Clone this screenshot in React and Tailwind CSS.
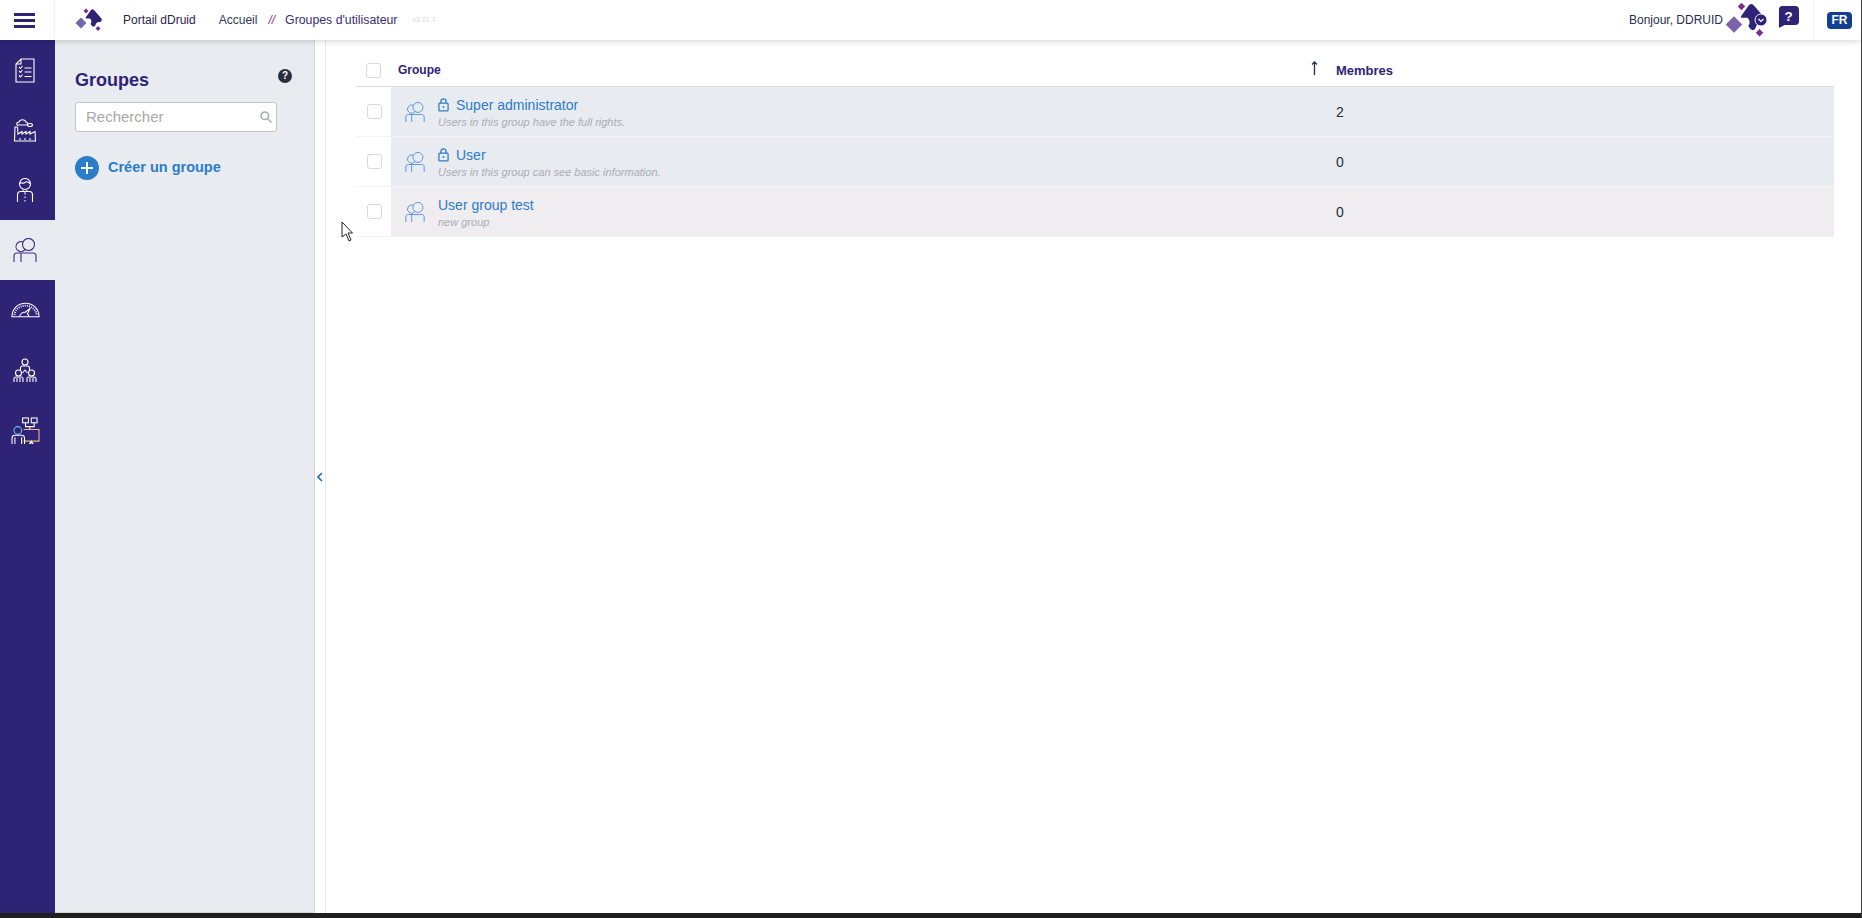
import React from "react";

const rows = [
  { name: "Super administrator", desc: "Users in this group have the full rights.", count: 2, locked: true, bg: "bg-[#e8ebf0]" },
  { name: "User", desc: "Users in this group can see basic information.", count: 0, locked: true, bg: "bg-[#e8ebf0]" },
  { name: "User group test", desc: "new group", count: 0, locked: false, bg: "bg-[#f0edf0]" },
];

function Logo({ className, badge }) {
  return (
    <svg viewBox="0 0 28 24" className={className}>
      <path d="M6 9.500 11.500 15 6 20.500.5 15Z" fill="#7b63ab" />
      <path d="M11 .5 13.500 3 11 5.500 8.500 3Z" fill="#7a2f8f" />
      <path d="M16 2c1-1 2-1 3 0l7 8c1 1 1 2.500 0 3.500l-1 .5c-2-.5-4 .5-4.500 3l-.5 1c-1 1-2 1-3 0l-1.500-2c1.500-2 1-4-.5-5.500L11 10.500c-.5-.5-.5-1 0-1.500Z" fill="#2f2376" />
      <path d="M23 18 25.500 20.500 23 23 20.500 20.500Z" fill="#7a2f8f" />
      {badge && <circle cx="24" cy="12" r="4" fill="#2f2376" stroke="#fff" strokeWidth="0.6" />}
      {badge && <path d="m22.300 11.300 1.700 1.600 1.700-1.600" fill="none" stroke="#fff" strokeWidth="0.8" />}
    </svg>
  );
}

function GroupIcon({ className }) {
  return (
    <svg viewBox="0 0 24 24" fill="none" stroke="currentColor" strokeWidth="1.100" className={className}>
      <path d="M10.060 3.950A5 5 0 1 0 12.060 11.410" />
      <circle cx="15.500" cy="6.500" r="6" />
      <path d="M1 24v-6c0-2 1-3 3-3h16c2 0 3 1 3 3v6M8 15v9" />
    </svg>
  );
}

function LockIcon() {
  return (
    <svg viewBox="0 0 12 15" fill="none" stroke="#2b7cc9" strokeWidth="1.400" className="w-[11px] h-[14px] shrink-0">
      <rect x="1" y="5.500" width="10" height="8.500" rx="1" />
      <path d="M3.200 5.500V3.500a2.800 2.800 0 0 1 5.600 0v2" />
      <circle cx="6" cy="9.700" r="1" fill="#2b7cc9" stroke="none" />
    </svg>
  );
}

function NavItem({ active, children }) {
  return (
    <div className={"h-[60px] flex items-center justify-center pr-[5px] " + (active ? "bg-[#e8ebf0] text-[#3a2d86]" : "text-white")}>
      {children}
    </div>
  );
}

function Checkbox() {
  return <div className="w-[15px] h-[15px] rounded-[3px] border border-[#d9d9d9] bg-white shrink-0" />;
}

export default function App() {
  return (
    <div className="relative w-[1862px] h-[918px] flex flex-col overflow-hidden bg-white font-['Liberation_Sans',Arial,sans-serif] border-r border-[#3a3a3a]">
      <header className="h-10 flex items-center shrink-0 bg-white shadow-[0_1px_6px_rgba(0,0,0,0.18)] relative z-10">
        <div className="w-[55px] h-full flex items-center justify-center pr-[6px] border-r border-[#f0f0f0]">
          <div className="w-[21px] flex flex-col gap-[3px]">
            <span className="h-[3px] bg-[#2f2376]" />
            <span className="h-[3px] bg-[#2f2376]" />
            <span className="h-[3px] bg-[#2f2376]" />
          </div>
        </div>
        <Logo className="w-[28px] h-[24px] ml-5" />
        <span className="ml-5 text-xs text-[#2b2350]">Portail dDruid</span>
        <span className="ml-[23px] text-xs text-[#2b3a5c]">Accueil</span>
        <span className="ml-[11px] text-xs italic text-[#8a2a8f]">//</span>
        <span className="ml-[10px] text-[12.300px] text-[#3a2d76]">Groupes d'utilisateur</span>
        <span className="ml-[15px] text-[7px] text-[#d8d8d8]">v3.21.7</span>
        <div className="ml-auto flex items-center h-full">
          <span className="text-xs text-[#2b2d50]">Bonjour, DDRUID</span>
          <Logo badge className="w-[42px] h-[36px] ml-[2px]" />
          <svg viewBox="0 0 22 23" className="w-[21px] h-[22px] ml-[11px] -mt-[6px]">
            <path d="M4 0h14a4 4 0 0 1 4 4v12a4 4 0 0 1-4 4H7l-6 3 0-19a4 4 0 0 1 3-4Z" fill="#2f2376" />
            <text x="11" y="15.500" textAnchor="middle" fontSize="14" fontWeight="700" fill="#fff" fontFamily="Liberation Sans">?</text>
          </svg>
          <div className="w-12 h-full ml-[14px] flex items-center justify-center pl-[4px] border-l border-[#f0f0f0]">
            <span className="w-[25px] h-[17px] rounded-[4px] bg-[#12408f] text-white text-xs font-bold leading-[17px] text-center">FR</span>
          </div>
        </div>
      </header>

      <div className="flex flex-1 min-h-0">
        <nav className="w-[55px] shrink-0 bg-[#2f2376]">
          <NavItem>
            <svg viewBox="0 0 20 25" fill="none" stroke="currentColor" strokeWidth="1.100" className="w-5 h-[25px]">
              <path d="M6 1h13v23H1V6ZM6 1v5H1" />
              <path d="m4 9 1.500 1.500L7.500 8M4 13l1.500 1.500L7.500 12M4 17.500 5.500 19l2-2.500M9.500 10h7M9.500 14h7M9.500 18.500h7" />
            </svg>
          </NavItem>
          <NavItem>
            <svg viewBox="0 0 24 24" fill="none" stroke="currentColor" strokeWidth="1.100" className="w-6 h-6">
              <path d="M1.500 23 2 9h2.500l.5 7 4-2.500V16l4-2.500V16l4-2.500V16l5-2.500.5 9.500Z" />
              <path d="M7 20v2M12 20v2M17 20v2" />
              <path d="M4 7c-1-2 1-3 2-3 1-3 6-3 7 0 2 0 2 3 0 3Z" />
              <ellipse cx="17" cy="7" rx="2.500" ry="1.500" />
            </svg>
          </NavItem>
          <NavItem>
            <svg viewBox="0 0 18 25" fill="none" stroke="currentColor" strokeWidth="1.100" className="w-[18px] h-[25px]">
              <circle cx="9" cy="6" r="5.500" />
              <path d="M3.500 5.500c2-2 3 1 5.500-1s3 0 5.500 1M1.500 24v-7c0-2 1-3.500 3-3.500h9c2 0 3 1.500 3 3.500v7" />
              <path d="M9 15v9" strokeDasharray="1.500 2" />
              <path d="m6.500 12.500 2.500 1.500 2.500-1.500" />
            </svg>
          </NavItem>
          <NavItem active>
            <GroupIcon className="w-6 h-6" />
          </NavItem>
          <NavItem>
            <svg viewBox="0 0 30 16" fill="none" stroke="currentColor" strokeWidth="1.100" className="w-[29px] h-4">
              <path d="M1 15C1 7 7 1 15 1s14 6 14 14Z" />
              <path d="M3.500 13C4 8 9 3.500 15 3.500S26 8 26.500 13" strokeDasharray="1 1.200" strokeWidth="2" />
              <path d="M9 15c0-3 3-5 5.500-4.500L20 6l-3 6c1 1 1.500 2 1.500 3" />
            </svg>
          </NavItem>
          <NavItem>
            <svg viewBox="0 0 24 25" fill="none" stroke="currentColor" strokeWidth="1.100" className="w-6 h-[25px]">
              <circle cx="12" cy="4" r="3" />
              <path d="M7.500 12v-2c0-1 .5-2 2-2h5c1.500 0 2 1 2 2v2" />
              <circle cx="5.500" cy="15" r="3" />
              <circle cx="18.500" cy="15" r="3" />
              <path d="M1 24v-3c0-1 .5-2 2-2h5c1.500 0 2 1 2 2v3M14 24v-3c0-1 .5-2 2-2h5c1.500 0 2 1 2 2v3M4 24v-4M7 24v-4M17 24v-4M20 24v-4M9.500 15l2.500-3 2.500 3" />
            </svg>
          </NavItem>
          <NavItem>
            <svg viewBox="0 0 30 28" fill="none" stroke="currentColor" strokeWidth="1.100" className="w-[29px] h-[27px]">
              <rect x="12" y="1" width="6" height="5" />
              <rect x="21" y="1" width="6" height="5" />
              <path d="M15 6v4h9V6M19.500 10v3" />
              <path d="M13 13h16v12H13" stroke="#f0b98a" />
              <path d="M19 28l2-3 2 3Z" />
              <circle cx="7" cy="14" r="4" stroke="#6fc3f0" />
              <path d="M1 28v-6c0-2 1-3 3-3h7c2 0 3 1 3 3v6M4 28v-7M11 28v-7" />
            </svg>
          </NavItem>
        </nav>

        <aside className="w-[260px] shrink-0 bg-[#e8ebf0] border-r border-b border-[#d5d7da] pt-[30px] pl-5 pr-[37px]">
          <div className="flex items-start justify-between h-8">
            <h1 className="text-lg leading-5 font-bold text-[#2f2376]">Groupes</h1>
            <span className="w-[14px] h-[14px] mt-[-1px] mr-[-15px] rounded-full bg-[#2a2f3e] text-white text-[10px] font-bold leading-[14px] text-center">?</span>
          </div>
          <div className="h-[30px] w-[202px] flex items-center justify-between pl-[10px] pr-[11px] bg-white border border-[#c4c4c4] rounded-[3px]">
            <span className="text-[15px] text-[#a8a8a8]">Rechercher</span>
            <svg viewBox="0 0 12 12" fill="none" stroke="#a9adb3" strokeWidth="1.500" className="w-3 h-3 -mr-[7px]">
              <circle cx="4.800" cy="4.800" r="3.800" />
              <path d="m7.800 7.800 3.700 3.700" />
            </svg>
          </div>
          <div className="flex items-center mt-[24px]">
            <span className="w-6 h-6 rounded-full bg-[#2b7cc9] flex items-center justify-center">
              <svg viewBox="0 0 14 14" stroke="#fff" strokeWidth="2" className="w-[14px] h-[14px]">
                <path d="M7 1v12M1 7h12" />
              </svg>
            </span>
            <span className="ml-[9px] text-[14.500px] font-bold text-[#2b7cc9]">Créer un groupe</span>
          </div>
        </aside>

        <div className="w-[11px] shrink-0 border-r border-[#e8e8e8] flex items-center justify-center pr-[1px]">
          <svg viewBox="0 0 6 10" fill="none" stroke="#1f6fb5" strokeWidth="1.600" className="w-[6px] h-[10px]">
            <path d="M5 1 1 5l4 4" />
          </svg>
        </div>

        <main className="flex-1 min-w-0 pl-[30px] pr-[27px] pt-[14px]">
          <div className="h-[33px] flex items-center border-b border-[#dcdcdc]">
            <div className="w-[42px] pl-[10px] shrink-0"><Checkbox /></div>
            <div className="w-[920px] flex items-center justify-between">
              <span className="text-xs font-bold text-[#2f2376]">Groupe</span>
              <svg viewBox="0 0 7 14" fill="none" stroke="#2a2f50" strokeWidth="1.300" className="w-[7px] h-[14px] -mt-[4px]">
                <path d="M3.500 14V1M1 3.500 3.500 1 6 3.500" />
              </svg>
            </div>
            <span className="ml-[18px] mt-[1px] text-[13px] font-bold text-[#2f2376]">Membres</span>
          </div>
          {rows.map((row) => (
            <div key={row.name} className="h-[50px] flex items-center border-b border-[#f3f3f3]">
              <div className="w-[35px] pl-[11px] shrink-0"><Checkbox /></div>
              <div className={"flex-1 h-full flex items-center " + row.bg}>
                <GroupIcon className="w-5 h-5 ml-[14px] text-[#4f8fe0] shrink-0" />
                <div className="ml-[13px] w-[898px] shrink-0">
                  <div className="flex items-center gap-[7px] h-5">
                    {row.locked && <LockIcon />}
                    <span className="text-sm text-[#2b7cc9]">{row.name}</span>
                  </div>
                  <div className="text-[11px] italic leading-[14px] text-[#a9adb5]">{row.desc}</div>
                </div>
                <span className="text-sm text-[#2b2d3a]">{row.count}</span>
              </div>
            </div>
          ))}
        </main>
      </div>

      <div className="h-[5px] shrink-0 bg-[#1f1f1f]" />

      <svg viewBox="0 0 12 21" className="absolute left-[341px] top-[221px] w-3 h-[21px]">
        <path d="M1 1v15l4-3 3 7 2-1-3-7h4.500Z" fill="#fff" stroke="#222" strokeWidth="1" />
      </svg>
    </div>
  );
}
